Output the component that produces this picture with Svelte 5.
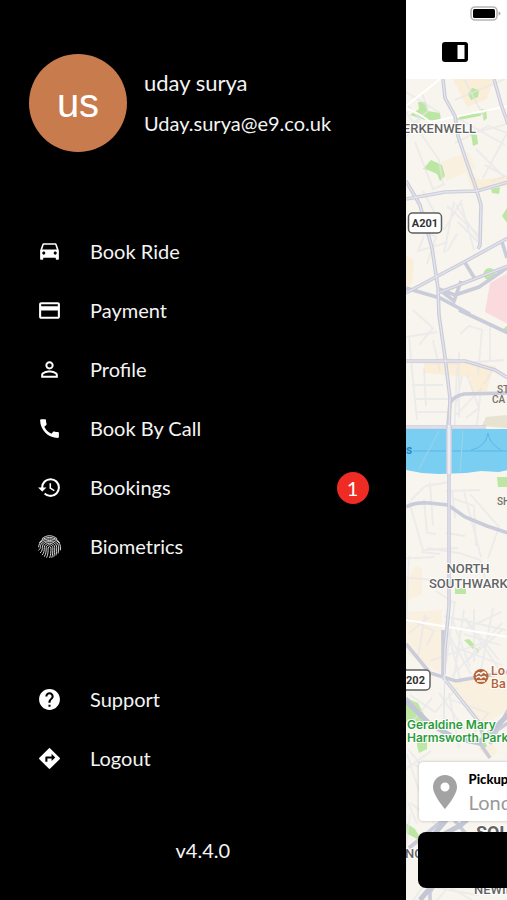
<script>
  const mainItems = [
    { label: 'Book Ride', icon: 'car' },
    { label: 'Payment', icon: 'card' },
    { label: 'Profile', icon: 'person' },
    { label: 'Book By Call', icon: 'phone' },
    { label: 'Bookings', icon: 'history', badge: 1 },
    { label: 'Biometrics', icon: 'finger' }
  ];
  const footItems = [
    { label: 'Support', icon: 'help' },
    { label: 'Logout', icon: 'directions' }
  ];
  const icons = {
    car: 'M18.92 5.01C18.72 4.42 18.16 4 17.5 4h-11c-.66 0-1.21.42-1.42 1.01L3 11v8c0 .55.45 1 1 1h1c.55 0 1-.45 1-1v-1h12v1c0 .55.45 1 1 1h1c.55 0 1-.45 1-1v-8l-2.08-5.99zM6.5 15c-.83 0-1.5-.67-1.5-1.5S5.67 12 6.5 12s1.5.67 1.5 1.5S7.33 15 6.5 15zm11 0c-.83 0-1.5-.67-1.5-1.5s.67-1.5 1.5-1.5 1.5.67 1.5 1.5-.67 1.5-1.5 1.5zM5 10l1.5-4.5h11L19 10H5z',
    card: 'M20 4H4c-1.11 0-1.99.89-1.99 2L2 18c0 1.11.89 2 2 2h16c1.11 0 2-.89 2-2V6c0-1.11-.89-2-2-2zm0 14H4v-6h16v6zm0-10H4V6h16v2z',
    person: 'M12 5.9a2.1 2.1 0 1 1 0 4.2 2.1 2.1 0 0 1 0-4.2m0 9c2.97 0 6.1 1.46 6.1 2.1v1.1H5.9V17c0-.64 3.13-2.1 6.1-2.1M12 4C9.79 4 8 5.79 8 8s1.79 4 4 4 4-1.79 4-4-1.79-4-4-4zm0 9c-2.67 0-8 1.34-8 4v3h16v-3c0-2.66-5.33-4-8-4z',
    phone: 'M20.01 15.38c-1.23 0-2.42-.2-3.53-.56-.35-.12-.74-.03-1.01.24l-1.57 1.97c-2.83-1.35-5.48-3.9-6.89-6.83l1.95-1.66c.27-.28.35-.67.24-1.02-.37-1.11-.56-2.3-.56-3.53 0-.54-.45-.99-.99-.99H4.19C3.65 3 3 3.24 3 3.99 3 13.28 10.73 21 20.01 21c.71 0 .99-.63.99-1.18v-3.45c0-.54-.45-.99-.99-.99z',
    history: 'M13 3a9 9 0 0 0-9 9H1l3.89 3.89.07.14L9 12H6c0-3.87 3.13-7 7-7s7 3.13 7 7-3.13 7-7 7c-1.93 0-3.68-.79-4.94-2.06l-1.42 1.42A8.954 8.954 0 0 0 13 21a9 9 0 0 0 0-18zm-1 5v5l4.28 2.54.72-1.21-3.5-2.08V8H12z',
    help: 'M12 2C6.48 2 2 6.48 2 12s4.48 10 10 10 10-4.48 10-10S17.52 2 12 2zm1 17h-2v-2h2v2zm2.07-7.75l-.9.92C13.45 12.9 13 13.5 13 15h-2v-.5c0-1.1.45-2.1 1.17-2.83l1.24-1.26c.37-.36.59-.86.59-1.41 0-1.1-.9-2-2-2s-2 .9-2 2H8c0-2.21 1.79-4 4-4s4 1.79 4 4c0 .88-.36 1.68-.93 2.25z',
    directions: 'M21.71 11.29l-9-9a.996.996 0 0 0-1.41 0l-9 9a.996.996 0 0 0 0 1.41l9 9c.39.39 1.02.39 1.41 0l9-9a.996.996 0 0 0 0-1.41zM14 14.5V12h-4v3H8v-4c0-.55.45-1 1-1h5V7.5l3.5 3.5-3.5 3.5z'
  };
</script>

{#snippet row(item)}
  <li>
    <a class="row" href="#{item.icon}">
      <svg class="icon" viewBox="0 0 24 24" aria-hidden="true">
        {#if item.icon === 'finger'}
          <g fill="none" stroke="#e4e4e4" stroke-width="0.9" stroke-linecap="round">
            <path d="M5 4.3C9 .7 15 .7 19 4.3M2.3 8.4C6.1 1.5 17.9 1.5 21.7 8.4M1.5 12.3C2.2 2.2 21.8 2.2 22.5 12.3v3" />
            <path d="M1.7 15.5c1.5-1 1.5-2 1.5-3.2C3.6 4.3 20.4 4.3 20.8 12.3c0 2.3 0 4-.5 6" />
            <path d="M3.3 18c1.8-1.6 1.8-3.5 1.8-5.2 0-7.3 13.8-7.3 13.8 0 0 2.8 0 5-.6 7.4" />
            <path d="M5.2 20c1.7-2 1.8-4.7 1.8-7 0-5.5 10-5.5 10 0 0 3.5 0 6-.8 8.5" />
            <path d="M7.2 21.5C8.8 19 8.8 16 8.8 13.3c0-4 6.4-4 6.4 0 0 3.8 0 6.5-.9 9.2" />
            <path d="M9.3 22.4c1.4-2.7 1.4-5.7 1.4-8.900 0-1.800 2.700-1.800 2.700 0 0 3.600-.1 6.500-1.200 9.200" />
          </g>
        {:else}
          <path d={icons[item.icon]} fill="#fff" fill-rule="evenodd" />
        {/if}
      </svg>
      <span class="label">{item.label}</span>
      {#if item.badge}<span class="badge">{item.badge}</span>{/if}
    </a>
  </li>
{/snippet}

<div class="app">
  <aside class="drawer">
    <header class="user">
      <div class="avatar">us</div>
      <div class="who">
        <div class="name">uday surya</div>
        <div class="mail">Uday.surya@e9.co.uk</div>
      </div>
    </header>
    <nav>
      <ul>
        {#each mainItems as item}{@render row(item)}{/each}
      </ul>
      <ul class="foot">
        {#each footItems as item}{@render row(item)}{/each}
      </ul>
    </nav>
    <p class="version">v4.4.0</p>
  </aside>

  <main>
    <div class="top">
      <svg class="battery" viewBox="0 0 31 15" aria-hidden="true">
        <rect x="1" y="1" width="26" height="13" rx="4" fill="#fff" stroke="#b5b5b5" stroke-width="1.6" />
        <rect x="3" y="3" width="22" height="9" rx="1.5" fill="#000" />
        <path d="M28.5 5.5q2 .6 2 2t-2 2z" fill="#aaa" />
      </svg>
      <button class="toggle" aria-label="Toggle menu">
        <svg viewBox="0 0 26 20" aria-hidden="true">
          <rect width="26" height="20" rx="3" fill="#000" />
          <rect x="15.5" y="3" width="7" height="14" fill="#fff" />
        </svg>
      </button>
    </div>

    <div class="map">
      <svg class="tiles" viewBox="406 79 102 821" preserveAspectRatio="xMinYMin slice" role="img" aria-label="Map">
        <rect x="406" y="79" width="102" height="821" fill="#f7f5ed" />
        <g fill="#fbeed8">
          <path d="M453 79h40l-6 20-20 8zM466 172l14 8 27-4v10l-34 4zM424 362l20-5 50 9-8 28-14 1-2-18-46-4zM406 255l8 6-2 22-6 4z" />
          <path d="M406 612l36-2v64l-34-20zM449 681l58-11v40l-24 15zM406 580l9-14 7 2v26l-16 7zM478 748l14-4 6 8-10 6zM441 162l27-10 8 16-30 13z" opacity=".7" />
        </g>
        <path d="M508 273l-18 10-5 29 23 12z" fill="#fbdadd" />
        <path d="M486 417l22-2v13l-26-2z" fill="#e8e2d1" />
        <g fill="#bce6a4">
          <path d="M410 115l9-6-1-7 8 0 2 9 12 2 1 8-16-1zM456 119l8-5 20-1 2-4-6 7-16 3-9 2zM468 94l4-6 7 2-1 7-7 3zM471 134l6 1 1 9-5 2zM423 169l8-9 11 5 3 11-5 5-3-7-9-4zM484 121l-3-12 5 1 1 8zM491 189l9-2-1 7-7-1zM508 206l-6 10 6 8zM508 325l-5 4 5 3zM497 477h11v10h-10zM455 588h11v6h-11zM464 640l5-1 6 6-2 4zM475 647l4 3-1 4zM406 698l12 5 11 21-23-2zM417 736h10v13l-8 4-2-7zM478 739l5-2 4 9-5 4zM406 823l9 6 7 12-7-3-9-5z" />
          <circle cx="489.5" cy="274" r="6" />
        </g>
        <g fill="none" stroke="#e7e6ea" stroke-width="1.8" opacity=".65">
          <path d="M406 104l14 15-14 18m0-25l33 48 4 24m-37-55l22-18-6-18m33 50l33-17 19 7-24 45m-31-63l53 30M455 100l50-21M485 165l22 12m-38-43l38-10M464 79l20 38m-78-25l34 21M476 149l28 28-12 4M415 142l18 47 12-5" />
          <path d="M447 206l35 32m-26-33l22 33m-34-8l18-30m-5 34l-10 17m-24-60l16 30-8 14m-22-10l27 12-9 27m31-42l20 20m-54-6l-6 15 30-9m13-39l13 47m-20-48l-10 51" />
          <path d="M413 310l20 18-14 17m-13-8l31-5m-28 4l3 35m21-31l7 31m20-37l9-8 13 4-4 45m-13-12l39-3m-14-36v38m-33 5l-3 77m8-68l-7 33m-31-41l2 38m-14-36l5 50m-5-35h31m-27 14h39m-40 13h35m9-60v65m-48-55l48 2M456 415l25-26-4 36m-10-50l12 33-13 10m29-52l-11 18" />
          <path d="M411 500l14-14 24-4m-19 0l3 44m-9-27l3 34 9 1m-27-33l14 49 35-2m6-56l17 65m-29-59l22 8 2 40m-30-55l34-1m-28 0l3 28m15-24l29 33-11 31m-42-25l19 3m-38 12l32 5 21 7 8 28m-67-36l19 2m14 49l-18-12m-44-32l43-2m-37 20l37 3m-26-24l-3 69m19-10l-7 42m27-29l26 46m-16-73l-9 62m28-54v53m-44-1l55-19" />
          <path d="M406 618l28 13-7 14m-18-12l20-16m15-1l62 14m-60-7l15 60m4-65l34 42m-47-41l18 48m-5-48l36 53m-37-38l36 11m-45 2l47 18m-43-33l42-20m-49 64l50-53m-38-13l-10 67m39-69l-13 67m22-45l-40 35" />
          <path d="M410 695l25 17 22-24m-18 5l26 37m-33-32l-18 22m35-27l10 55m-7-48l36 13-20 28m-37 10l-25 18m3-6l40 15m-42-24l12 37m-11-42l24 29m-26 15v80m2-71l9 22m-7-10l-8 65m9-76l29 25m-30 18l42-11m-28 50l-17 24m20-23l50 9m-43-17l43 25m-30-14l-16 18" />
        </g>
        <path d="M440 79l-15 12-19 15M406 108q16 7 24 14l78-16M406 620l54 9 48 8" fill="none" stroke="#fff" stroke-width="2" />
        <path d="M406 429h102v41l-9 2-18-1-15 2-27 1-17-1-16-3z" fill="#79cef2" />
        <path d="M413 451h95m-37-1q15-3 17-17 1 10 14 18" fill="none" stroke="#5cb7e6" stroke-width="1" />
        <path d="M439 431l-20 38m44-38l-3 41" stroke="#9bd5ea" stroke-width="1" />
        <g fill="none" stroke="#cbccda" stroke-width="3.6">
          <path d="M443 79l2 19 10 18 3 20 8 24 9 25 6 20-1 40-2 4M494 79l7 25 7 20M406 199l39-7 32-1 31-9" />
          <path d="M406 181l14 24 12 43 6 40 1 27 6 42 5 41-1 32v176l-4 43-1 25M406 293l60-32 42-23M438 293l70-27M439 289l16 6 24-8 29-20M406 288l34 10 30 16M459 310l49 23M440 290l14 11 7-20M464 261l11 18M502 242l5 16M406 361h59l30 9 13 8" />
          <path d="M448 425l2-22q4-7 14-9l44-1M406 427h80M406 507q8-5 23-4l19 2 17 12 22 9 21 7M443 630v45M406 644l24 29 26 8 52-9M443 677l35 44 7 20M422 818l26-7M406 698l22 25 25 14 26 5 29-19M479 742l11 16M508 710l-18 34M448 816l-39 32M430 900v-8l28-39M450 815l22 26" />
        </g>
        <path d="M443 79l2 19 10 18 3 20 8 24 9 25 6 20-1 40-2 4M494 79l7 25 7 20M406 199l39-7 32-1 31-9M406 181l14 24 12 43 6 40 1 27 6 42 5 41-1 32v176l-4 43-1 70M406 293l60-32 42-23M438 293l70-27M406 361h59l30 9 13 8M406 427h80M443 677l35 44" fill="none" stroke="#e4e4ec" stroke-width="1.3" />
        <path d="M449 425v49" stroke="#c5cede" stroke-width="6" />
        <path d="M449 425v49" stroke="#ececf2" stroke-width="3" />
        <path d="M406 701l24 23 25 14 24 5 29-28M448 818l29-7-16 14-35 19zM420 900l18-21" fill="none" stroke="#c3c6d4" stroke-width="5" />

        <g class="place">
          <text x="476" y="133" text-anchor="end">ERKENWELL</text>
          <text x="468" y="573" text-anchor="middle">NORTH</text>
          <text x="429" y="588">SOUTHWARK</text>
          <text x="405" y="858">NO</text>
          <text x="474" y="894">NEWINGTON</text>
          <text class="big" x="476" y="839">SOU</text>
        </g>
        <g class="small">
          <text x="497" y="393">ST</text>
          <text x="492" y="403">CA</text>
          <text x="497" y="505">SH</text>
        </g>
        <text class="river" x="406" y="454">s</text>
        <g class="park">
          <text x="407" y="729">Geraldine Mary</text>
          <text x="407" y="742">Harmsworth Park</text>
        </g>
        <g class="station">
          <circle cx="481" cy="676.5" r="7.5" fill="#b5653b" />
          <path d="M476 675q3-4 5-1 3-4 5 0M476 678q3-3 5 0 3-3 5 0M477 681h8" fill="none" stroke="#fff" stroke-width="1.4" />
          <text x="491" y="675">Lo</text>
          <text x="491" y="688">Ba</text>
        </g>
        <g class="shield">
          <rect x="408.5" y="213" width="33" height="20" rx="4" />
          <text x="425" y="227" text-anchor="middle">A201</text>
          <rect x="390" y="670" width="40" height="20" rx="4" />
          <text x="425" y="684" text-anchor="end">3202</text>
        </g>
      </svg>

      <div class="pickup">
        <svg class="pin" viewBox="0 0 24 34" aria-hidden="true">
          <path d="M12 0C5.2 0 0 5.2 0 12c0 8.5 12 22 12 22s12-13.5 12-22C24 5.2 18.8 0 12 0zm0 16.5a4.5 4.5 0 1 1 0-9 4.5 4.5 0 0 1 0 9z" fill="#a3a3a3" />
        </svg>
        <div class="field">
          <label for="pickup">Pickup</label>
          <input id="pickup" type="text" placeholder="London" />
        </div>
      </div>
      <button class="cta" aria-label="Continue"></button>
    </div>
  </main>
</div>

<style>
  :global(body) {
    margin: 0;
    background: #000;
  }
  .app {
    display: grid;
    grid-template-columns: 80% 1fr;
    min-height: 100vh;
    overflow: hidden;
    font-family: Lato, "Open Sans", sans-serif;
    color: #f4f4f4;
  }
  .drawer {
    display: flex;
    flex-direction: column;
    background: #000;
    box-sizing: border-box;
    padding: 54px 37px 37px 0;
  }
  .user {
    display: flex;
    align-items: center;
    gap: 17px;
    padding-left: 29px;
    margin-bottom: 70px;
  }
  .avatar {
    flex: none;
    width: 98px;
    height: 98px;
    border-radius: 50%;
    background: #c87c4e;
    color: #fff;
    font: 40px/98px "Liberation Sans", Arial, sans-serif;
    text-align: center;
  }
  .name,
  .mail {
    font-size: 20px;
    line-height: 40px;
    white-space: nowrap;
  }
  .name {
    font-size: 22px;
  }
  ul {
    list-style: none;
    margin: 0;
    padding: 0;
  }
  .foot {
    margin-top: 94px;
  }
  .row {
    display: flex;
    align-items: center;
    height: 59px;
    padding-left: 37px;
    color: inherit;
    text-decoration: none;
    font-size: 20px;
    line-height: 24px;
  }
  .icon {
    flex: none;
    width: 25px;
    height: 25px;
    margin-right: 28px;
  }
  .label {
    flex: 1;
    padding-bottom: 2px;
  }
  .badge {
    width: 32px;
    height: 32px;
    border-radius: 50%;
    background: #ee2c24;
    color: #fff;
    line-height: 32px;
    text-align: center;
  }
  .version {
    margin: auto 0 0;
    padding-left: 37px;
    font-size: 20px;
    line-height: 26px;
    text-align: center;
  }
  main {
    display: flex;
    flex-direction: column;
    min-width: 0;
    overflow: hidden;
    background: #fff;
  }
  .top {
    display: flex;
    flex-direction: column;
    height: 73px;
    padding-top: 6px;
  }
  .battery {
    width: 31px;
    height: 15px;
    margin-left: 64px;
  }
  .toggle {
    align-self: flex-start;
    margin: 21px 0 0 36px;
    padding: 0;
    border: 0;
    background: none;
  }
  .toggle svg {
    display: block;
    width: 26px;
    height: 20px;
  }
  .map {
    position: relative;
    flex: 1;
    overflow: hidden;
  }
  .tiles {
    position: absolute;
    inset: 0;
    width: 100%;
    height: 100%;
  }
  text {
    font-family: Roboto, sans-serif;
  }
  .place text {
    font-size: 13px;
    font-weight: 500;
    fill: #646464;
    stroke: #fff;
    stroke-width: 2px;
    paint-order: stroke;
  }
  .place .big {
    font-size: 18px;
    font-weight: 700;
  }
  .small text {
    font-size: 10px;
    font-weight: 500;
    fill: #77736c;
  }
  .river {
    font-size: 12px;
    font-weight: 700;
    fill: #288bc4;
  }
  .park text,
  .station text {
    font-family: Inter, sans-serif;
    font-size: 12px;
    font-weight: 600;
    fill: #2b9d3a;
    stroke: #fff;
    stroke-width: 2px;
    paint-order: stroke;
  }
  .station text {
    fill: #b5653b;
  }
  .shield rect {
    fill: #fff;
    stroke: #5f5f5f;
    stroke-width: 1.5px;
  }
  .shield text {
    font-size: 11px;
    font-weight: 700;
    fill: #333;
  }
  .pickup {
    position: absolute;
    left: 13px;
    right: -240px;
    bottom: 79px;
    display: flex;
    align-items: center;
    gap: 12px;
    height: 59px;
    padding-left: 14px;
    border-radius: 4px;
    background: #fff;
    box-shadow: 0 0 3px rgba(0, 0, 0, 0.25);
  }
  .pin {
    flex: none;
    width: 24px;
    height: 34px;
  }
  .field {
    display: flex;
    flex-direction: column;
    gap: 1px;
  }
  label {
    color: #000;
    font-size: 13px;
    font-weight: 900;
    line-height: 20px;
  }
  input {
    width: 240px;
    height: 24px;
    padding: 0;
    border: 0;
    outline: 0;
    background: none;
    font: 20px/24px Lato, sans-serif;
  }
  input::placeholder {
    color: #999;
    opacity: 1;
  }
  .cta {
    position: absolute;
    left: 12px;
    right: -240px;
    bottom: 12px;
    height: 56px;
    border: 0;
    border-radius: 8px;
    background: #000;
  }
</style>
